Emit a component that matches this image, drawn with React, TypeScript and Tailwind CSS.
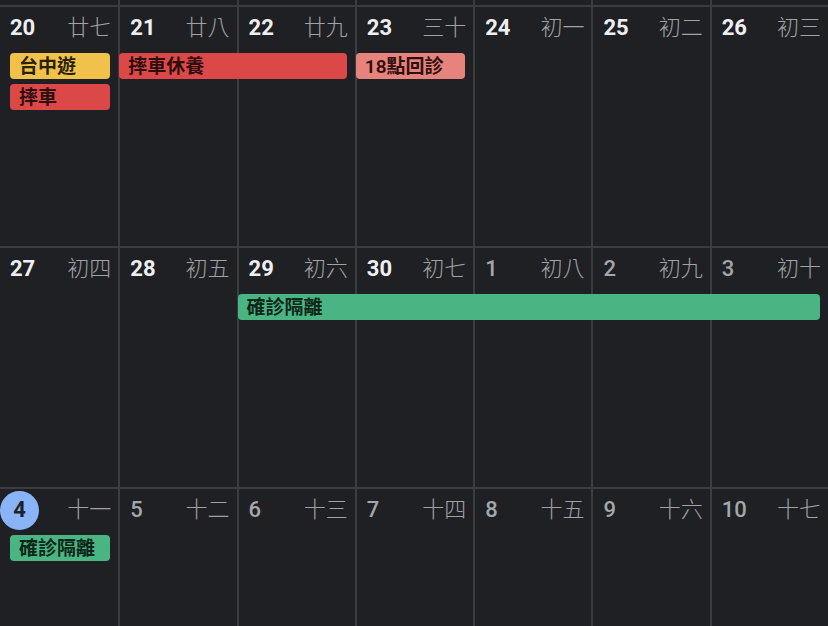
import React from 'react';

type Day = {
  num: number;
  lunar: string;
  current: boolean;
  today?: boolean;
};

type CalEvent = {
  title: string;
  col: number;
  span: number;
  row: number;
  tone: 'yellow' | 'red' | 'salmon' | 'green';
};

const toneClass: Record<CalEvent['tone'], string> = {
  yellow: 'bg-[#f1c24a] text-[#2a2208]',
  red: 'bg-[#dc4848] text-[#2e0c0c]',
  salmon: 'bg-[#e6837c] text-[#2e0f0d]',
  green: 'bg-[#4ab483] text-[#0c2619]',
};

const colStart = [
  'col-start-1',
  'col-start-2',
  'col-start-3',
  'col-start-4',
  'col-start-5',
  'col-start-6',
  'col-start-7',
];

const colSpan = [
  '',
  'col-span-1',
  'col-span-2',
  'col-span-3',
  'col-span-4',
  'col-span-5',
  'col-span-6',
  'col-span-7',
];

const weeks: { days: Day[]; events: CalEvent[] }[] = [
  {
    days: [
      { num: 20, lunar: '廿七', current: true },
      { num: 21, lunar: '廿八', current: true },
      { num: 22, lunar: '廿九', current: true },
      { num: 23, lunar: '三十', current: true },
      { num: 24, lunar: '初一', current: true },
      { num: 25, lunar: '初二', current: true },
      { num: 26, lunar: '初三', current: true },
    ],
    events: [
      { title: '台中遊', col: 0, span: 1, row: 0, tone: 'yellow' },
      { title: '摔車', col: 0, span: 1, row: 1, tone: 'red' },
      { title: '摔車休養', col: 1, span: 2, row: 0, tone: 'red' },
      { title: '18點回診', col: 3, span: 1, row: 0, tone: 'salmon' },
    ],
  },
  {
    days: [
      { num: 27, lunar: '初四', current: true },
      { num: 28, lunar: '初五', current: true },
      { num: 29, lunar: '初六', current: true },
      { num: 30, lunar: '初七', current: true },
      { num: 1, lunar: '初八', current: false },
      { num: 2, lunar: '初九', current: false },
      { num: 3, lunar: '初十', current: false },
    ],
    events: [{ title: '確診隔離', col: 2, span: 5, row: 0, tone: 'green' }],
  },
  {
    days: [
      { num: 4, lunar: '十一', current: false, today: true },
      { num: 5, lunar: '十二', current: false },
      { num: 6, lunar: '十三', current: false },
      { num: 7, lunar: '十四', current: false },
      { num: 8, lunar: '十五', current: false },
      { num: 9, lunar: '十六', current: false },
      { num: 10, lunar: '十七', current: false },
    ],
    events: [{ title: '確診隔離', col: 0, span: 1, row: 0, tone: 'green' }],
  },
];

function DayCell({ day, col }: { day: Day; col: number }) {
  return (
    <div
      className={`${colStart[col]} row-start-1 row-span-4 ${
        col > 0 ? 'border-l-2 border-[#3a3c40]' : ''
      }`}
    >
      <div
        className={`flex h-[42px] items-center justify-between pr-[7px] ${
          day.today ? 'pl-0' : 'pl-[10px]'
        }`}
      >
        {day.today ? (
          <span className="flex h-[39px] w-[39px] items-center justify-center rounded-full bg-[#8ab4f8] text-[22px] font-bold leading-none text-[#1f2227]">
            {day.num}
          </span>
        ) : (
          <span
            className={`text-[22px] leading-none ${
              day.current
                ? 'font-bold text-[#eeeff1]'
                : 'font-medium text-[#a3a6aa]'
            }`}
          >
            {day.num}
          </span>
        )}
        <span className="text-[22px] font-light leading-none text-[#a0a2a6]">
          {day.lunar}
        </span>
      </div>
    </div>
  );
}

function EventChip({ ev }: { ev: CalEvent }) {
  return (
    <div
      className={`${colStart[ev.col]} ${colSpan[ev.span]} ${
        ev.row === 0 ? 'row-start-2' : 'row-start-3'
      } ${ev.col === 0 ? 'ml-[10px]' : 'ml-[1px]'} mr-[8px] flex h-[26px] items-center self-start rounded-[4px] pl-[9px] text-[19px] font-semibold leading-none ${
        toneClass[ev.tone]
      }`}
    >
      {ev.title}
    </div>
  );
}

export default function App() {
  return (
    <div
      className="h-[626px] w-[828px] overflow-hidden bg-[#1f2023]"
      style={{
        fontFamily:
          'Roboto, "Noto Sans CJK TC", "Noto Sans CJK SC", sans-serif',
      }}
    >
      {/* tail of the previous week */}
      <div className="grid h-[5px] grid-cols-7">
        {colStart.map((c, i) => (
          <div
            key={c}
            className={i > 0 ? 'border-l-2 border-[#3a3c40]' : ''}
          />
        ))}
      </div>

      {weeks.map((week, wi) => (
        <div
          key={wi}
          className="grid h-[241px] grid-cols-7 grid-rows-[46px_31px_31px_1fr] border-t-2 border-[#3a3c40]"
        >
          {week.days.map((d, i) => (
            <DayCell key={`${wi}-${i}`} day={d} col={i} />
          ))}
          {week.events.map((ev, i) => (
            <EventChip key={`ev-${wi}-${i}`} ev={ev} />
          ))}
        </div>
      ))}
    </div>
  );
}
